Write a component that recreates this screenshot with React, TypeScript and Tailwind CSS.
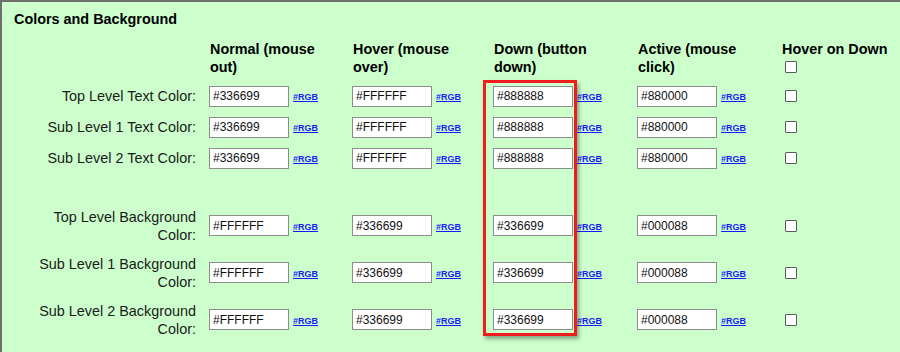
interface ColorRow {
  label: string[];
  values: string[];
  tall?: boolean;
}

const columns = [
  ['Normal (mouse', 'out)'],
  ['Hover (mouse', 'over)'],
  ['Down (button', 'down)'],
  ['Active (mouse', 'click)'],
];

const textRows: ColorRow[] = [
  { label: ['Top Level Text Color:'], values: ['#336699', '#FFFFFF', '#888888', '#880000'] },
  { label: ['Sub Level 1 Text Color:'], values: ['#336699', '#FFFFFF', '#888888', '#880000'] },
  { label: ['Sub Level 2 Text Color:'], values: ['#336699', '#FFFFFF', '#888888', '#880000'] },
];

const bgRows: ColorRow[] = [
  { label: ['Top Level Background', 'Color:'], values: ['#FFFFFF', '#336699', '#336699', '#000088'], tall: true },
  { label: ['Sub Level 1 Background', 'Color:'], values: ['#FFFFFF', '#336699', '#336699', '#000088'], tall: true },
  { label: ['Sub Level 2 Background', 'Color:'], values: ['#FFFFFF', '#336699', '#336699', '#000088'], tall: true },
];

const grid = 'grid grid-cols-[207px_143px_141px_144px_145px_1fr]';

function Checkbox() {
  return <span className="inline-block w-[12px] h-[12px] ml-[3px] bg-white border border-[#5a5a5a] rounded-[1px]" />;
}

function ColorCell({ value }: { value: string }) {
  return (
    <div className="flex items-baseline self-center">
      <input
        type="text"
        defaultValue={value}
        className="w-[80px] h-[21px] pl-[3px] bg-white border border-[#8c8c8c] text-[12px] text-[#111] outline-none"
      />
      <a href="#" className="ml-[4px] text-[9px] font-bold text-[#1a1aff] underline">
        #RGB
      </a>
    </div>
  );
}

function Row({ row }: { row: ColorRow }) {
  return (
    <div className={`${grid} ${row.tall ? 'h-[47px]' : 'h-[31px]'}`}>
      <div className="self-center text-right pr-[13px] leading-[18px] text-[14.4px] text-[#1a1a1a]">
        {row.label.map(line => (
          <div key={line}>{line}</div>
        ))}
      </div>
      {row.values.map((v, i) => (
        <ColorCell key={i} value={v} />
      ))}
      <div className="self-center flex">
        <Checkbox />
      </div>
    </div>
  );
}

export default function App() {
  return (
    <div
      className="relative w-[900px] h-[352px] overflow-hidden bg-[#ccffcc] border-t-2 border-l-2 border-[#6e6e6e] text-black"
      style={{ fontFamily: '"Liberation Sans", Arial, sans-serif' }}
    >
      <div className="mt-[8px] pl-[12px] text-[14.4px] leading-[18px] font-bold">Colors and Background</div>

      {/* column headers */}
      <div className={`${grid} mt-[12px] h-[40.5px] text-[14.4px] leading-[18px] font-bold`}>
        <div />
        {columns.map(c => (
          <div key={c[0]} className="pl-[1px]">
            <div>{c[0]}</div>
            <div>{c[1]}</div>
          </div>
        ))}
        <div>
          <div>Hover on Down</div>
          <div className="h-[18px] flex items-center">
            <Checkbox />
          </div>
        </div>
      </div>

      {textRows.map(r => (
        <Row key={r.label.join(' ')} row={r} />
      ))}
      <div className="h-[28.5px]" />
      {bgRows.map(r => (
        <Row key={r.label.join(' ')} row={r} />
      ))}

      {/* highlight around the Down column */}
      <div className="absolute left-[481px] top-[78px] w-[94px] h-[256px] border-[3px] border-[#ee1c1c] shadow-[2px_3px_4px_rgba(0,0,0,0.35)] pointer-events-none" />
    </div>
  );
}
